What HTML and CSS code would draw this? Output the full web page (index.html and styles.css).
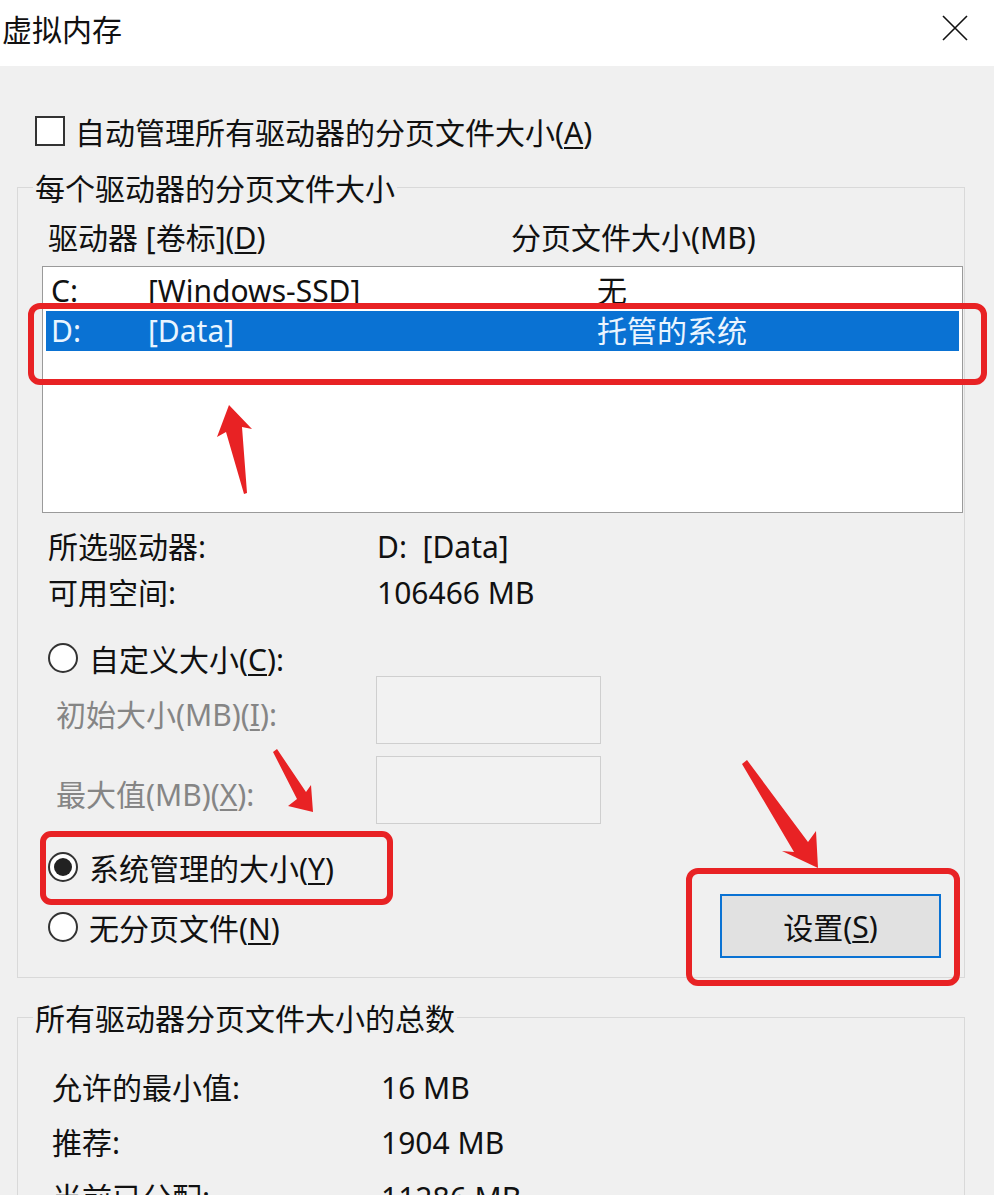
FILE: index.html
```html
<!DOCTYPE html>
<html lang="zh-CN">
<head>
<meta charset="utf-8">
<title>虚拟内存</title>
<link rel="stylesheet" href="styles.css">
</head>
<body>
<div class="window">
  <div class="titlebar">
    <div class="title">虚拟内存</div>
    <svg class="close" width="26" height="26" viewBox="0 0 26 26"><path d="M1 1 L25 25 M25 1 L1 25" stroke="#111" stroke-width="1.6" fill="none"/></svg>
  </div>

  <div class="auto-row">
    <span class="checkbox"></span>
    <span>自动管理所有驱动器的分页文件大小(<u>A</u>)</span>
  </div>

  <fieldset class="group group-drives">
    <legend>每个驱动器的分页文件大小</legend>
    <div class="list-header">
      <span>驱动器 [卷标](<u>D</u>)</span>
      <span>分页文件大小(MB)</span>
    </div>
    <div class="listbox">
      <div class="list-row">
        <span>C:</span><span>[Windows-SSD]</span><span>无</span>
      </div>
      <div class="list-row selected">
        <span>D:</span><span>[Data]</span><span>托管的系统</span>
      </div>
    </div>

    <div class="info">
      <div class="info-row"><span>所选驱动器:</span><span>D:&nbsp; [Data]</span></div>
      <div class="info-row"><span>可用空间:</span><span>106466 MB</span></div>
    </div>

    <div class="radio-row custom">
      <span class="radio"></span>
      <span>自定义大小(<u>C</u>):</span>
    </div>
    <div class="size-row">
      <span class="disabled">初始大小(MB)(<u>I</u>):</span>
      <span class="textbox"></span>
    </div>
    <div class="size-row second">
      <span class="disabled">最大值(MB)(<u>X</u>):</span>
      <span class="textbox"></span>
    </div>

    <div class="bottom">
      <div class="radios">
        <div class="radio-row">
          <span class="radio checked"></span>
          <span>系统管理的大小(<u>Y</u>)</span>
        </div>
        <div class="radio-row">
          <span class="radio"></span>
          <span>无分页文件(<u>N</u>)</span>
        </div>
      </div>
      <div class="button">设置(<u>S</u>)</div>
    </div>
  </fieldset>

  <fieldset class="group group-total">
    <legend>所有驱动器分页文件大小的总数</legend>
    <div class="total">
      <div class="total-row"><span>允许的最小值:</span><span>16 MB</span></div>
      <div class="total-row"><span>推荐:</span><span>1904 MB</span></div>
      <div class="total-row"><span>当前已分配:</span><span>11286 MB</span></div>
    </div>
  </fieldset>
</div>

<svg class="annotations" width="994" height="1195" viewBox="0 0 994 1195">
  <g fill="none" stroke="#e82224" stroke-width="6">
    <rect x="31" y="306" width="953" height="76" rx="9"/>
    <rect x="43" y="834" width="347" height="68" rx="8"/>
    <rect x="689" y="871" width="268" height="112" rx="9"/>
  </g>
  <g fill="#e82224">
    <polygon points="229,405 252,429 242,427 247,493 244,494 226,432 217,437"/>
    <polygon points="313,812 311,785 306,792 277,749 273,752 297,799 288,806"/>
    <polygon points="818,868 816,831 808,842 747,760 742,764 794,852 782,851"/>
  </g>
</svg>
</body>
</html>
```

FILE: styles.css
```css
html, body {
  margin: 0;
  padding: 0;
  overflow: hidden;
}
body {
  width: 994px;
  height: 1195px;
  background: #f0f0f0;
  font-family: "Noto Sans", "Noto Sans CJK SC", sans-serif;
  font-size: 30px;
  color: #111;
  position: relative;
}
u {
  text-decoration-thickness: 2px;
  text-underline-offset: 3px;
}
.titlebar {
  height: 66px;
  background: #fff;
  display: flex;
  justify-content: space-between;
  align-items: flex-start;
}
.title {
  margin-top: 10px;
  padding-left: 2px;
  line-height: 36px;
  font-family: "Noto Sans CJK SC", sans-serif;
}
.close {
  margin-top: 15px;
  margin-right: 26px;
}
.auto-row {
  margin-top: 47px;
  height: 36px;
  display: flex;
  align-items: center;
  padding-left: 35px;
  gap: 10px;
}
.checkbox {
  width: 30px;
  height: 30px;
  box-sizing: border-box;
  border: 2px solid #333;
  background: #fff;
}
.group {
  margin: 20px 29px 0 17px;
  padding: 0;
  border: 1px solid #d9d9d9;
  min-width: 0;
}
.group legend {
  margin-left: 15px;
  padding: 0 2px;
  line-height: 36px;
  font-family: "Noto Sans CJK SC", sans-serif;
}
.list-header {
  margin-top: 15px;
  line-height: 36px;
  padding-left: 30px;
  display: grid;
  grid-template-columns: 463px 1fr;
}
.listbox {
  margin: 10px 1px 0 24px;
  height: 247px;
  box-sizing: border-box;
  border: 1px solid #9a9a9a;
  background: #fff;
  padding: 4px 3px 0 3px;
}
.list-row {
  height: 40px;
  line-height: 40px;
  padding-left: 5px;
  display: grid;
  grid-template-columns: 97px 449px 1fr;
}
.list-row.selected {
  background: #0a72d3;
  color: #eaf5ff;
}
.info {
  margin-top: 11px;
  padding-left: 30px;
}
.info-row {
  line-height: 46px;
  display: grid;
  grid-template-columns: 329px 1fr;
}
.radio-row {
  height: 36px;
  display: flex;
  align-items: center;
  gap: 11px;
}
.radio-row.custom {
  margin-top: 24px;
  padding-left: 30px;
}
.radio {
  width: 30px;
  height: 30px;
  box-sizing: border-box;
  border: 2px solid #333;
  border-radius: 50%;
  background: #fff;
  display: flex;
  align-items: center;
  justify-content: center;
}
.radio.checked::after {
  content: "";
  width: 18px;
  height: 18px;
  border-radius: 50%;
  background: #222;
}
.size-row {
  display: grid;
  grid-template-columns: 320px 225px;
  align-items: center;
  padding-left: 38px;
}
.size-row.second {
  margin-top: 12px;
}
.disabled {
  color: #858585;
  padding-top: 6px;
}
.textbox {
  height: 68px;
  box-sizing: border-box;
  border: 1px solid #cfcfcf;
  background: #f2f2f2;
}
.bottom {
  margin-top: 25px;
  display: flex;
  align-items: flex-start;
  padding: 0 23px 19px 30px;
}
.radios {
  display: flex;
  flex-direction: column;
  gap: 24px;
}
.button {
  margin-left: auto;
  margin-top: 45px;
  width: 221px;
  height: 64px;
  box-sizing: border-box;
  border: 2px solid #0a72d3;
  background: #e1e1e1;
  display: flex;
  align-items: center;
  justify-content: center;
}
.group-total {
  margin-top: 21px;
}
.total {
  margin-top: 25px;
  padding-left: 34px;
}
.total-row {
  line-height: 55px;
  display: grid;
  grid-template-columns: 329px 1fr;
}
.annotations {
  position: absolute;
  left: 0;
  top: 0;
  pointer-events: none;
}
```
